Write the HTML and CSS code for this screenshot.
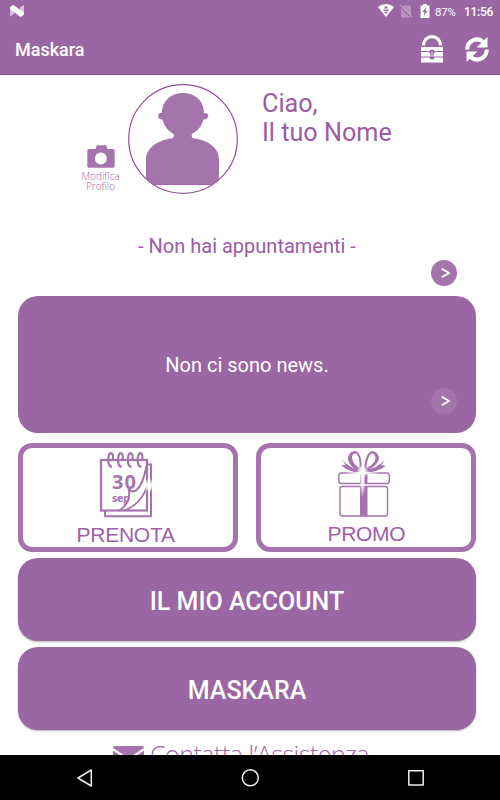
FILE: index.html
```
<!DOCTYPE html>
<html lang="it">
<head>
<meta charset="utf-8">
<title>Maskara</title>
<link rel="stylesheet" href="styles.css">
</head>
<body>
<div class="screen">
  <header class="top">
    <div class="status">
      <svg class="nougat" width="14" height="12" viewBox="0 0 14 12"><path d="M0 2 4 0v9L0 11.500zM10 2.500 14 0v9.500L10 12z" fill="#fff" opacity=".6"/><path d="M0 2 3.500 0 14 7.500v2L10.500 12 0 4z" fill="#fff"/></svg>
      <div class="status-right">
        <svg class="wifi" width="16" height="13" viewBox="0 0 16 13"><path d="M0 3Q8-3 16 3L8 13z" fill="#fff"/><path d="M6.200 4 7 2.500h2L9.800 4l1.200.6H5zM5.500 5.500h2l.5.5.5-.5h2v1.500h-2L8 6.500l-.5.500h-2zM6 8l2-.6L10 8 8 10z" fill="#9b66a4"/></svg>
        <svg class="nosim" width="12" height="13" viewBox="0 0 12 13"><path d="M3.500.5H11V12.500H1V3z" fill="#b990bf"/><path d="M0 1 12 13" stroke="#9b66a4" stroke-width="1.400"/><path d="M0 0 12 12" stroke="#cfb1d3"/></svg>
        <svg class="battery" width="10" height="14" viewBox="0 0 10 14"><path d="M3 0h4v1.500h2.500V14H.5V1.500H3z" fill="#fff"/><path d="M6 3 2.500 8h2L4 12l3.500-5h-2z" fill="#9b66a4"/></svg>
        <span class="percent">87%</span>
        <span class="clock">11:56</span>
      </div>
    </div>
    <div class="appbar">
      <h1>Maskara</h1>
      <svg class="lock" width="22" height="28" viewBox="0 0 22 28"><path d="M2.500 10.500V9.700a8.500 8 0 0 1 17 0v.8" fill="none" stroke="#fff" stroke-width="3.200"/><path d="M0 12h22v4H0zM0 17h22v4.500H0zM0 22.500h22V27.500H0z" fill="#fff"/><path d="M11 14.500a2.600 2.600 0 0 1 1.500 4.700l.8 5H8.700l.8-5A2.600 2.600 0 0 1 11 14.500z" fill="#9b66a4"/><path d="M11 17v5" stroke="#fff" stroke-width=".8"/></svg>
      <svg class="sync" width="24" height="25" viewBox="0 0 24 25"><path d="M2.300 12.500A9.700 9.700 0 0 1 18.500 5M21.700 12.500A9.700 9.700 0 0 1 5.500 20" fill="none" stroke="#fff" stroke-width="4"/><path d="M22.500 0v10.500H11.500zM1.500 25V14.500h11z" fill="#fff"/></svg>
    </div>
  </header>

  <main>
    <section class="profile">
      <div class="edit">
        <svg width="28" height="23" viewBox="0 0 28 23"><path d="M2 4h6.500L9.500.9Q9.700.2 10.500.2h8q.8 0 1 .7l.8 3.100H26q1.700 0 1.700 1.700v15.500q0 1.600-1.700 1.600H2Q.3 22.800.3 21.200V5.700Q.3 4 2 4z" fill="#a674ac"/><circle cx="13.800" cy="13.500" r="5.900" fill="#fff"/></svg>
        <span>Modifica</span><span>Profilo</span>
      </div>
      <svg class="avatar" width="110" height="110" viewBox="0 0 110 110">
        <clipPath id="ring"><circle cx="55" cy="55" r="54"/></clipPath>
        <g clip-path="url(#ring)"><path d="M55 9C68 9 76 18 76 29C82 28 81.500 36 75.500 35.500C74 42 70 46.500 64.500 49.500C63 51.500 63.500 54 66 54.500C81 56 91 65 91 75V100.500H18V75C18 65 29 56 43.500 54.500C46 54 46.500 51.500 45 49.500C39.500 46.500 36 42 34.500 35.500C28.500 36 29 28 34 29C34 18 42 9 55 9z" fill="#a674ac"/><path d="M18 100.500h73" stroke="#a268a8"/></g>
        <circle cx="55" cy="55" r="54.300" fill="none" stroke="#935099" stroke-width="1.200"/>
      </svg>
      <p class="greeting">Ciao,<br>Il tuo Nome</p>
    </section>

    <section class="appointments">
      <p>- Non hai appuntamenti -</p>
      <button class="more"><svg width="9" height="10" viewBox="0 0 9 10"><path d="M.8.8 8 5 .8 9.200" fill="none" stroke="#fff" stroke-width="1.700"/></svg></button>
    </section>

    <section class="news">
      <p>Non ci sono news.</p>
      <button class="more"><svg width="9" height="10" viewBox="0 0 9 10"><path d="M.8.8 8 5 .8 9.200" fill="none" stroke="#fff" stroke-width="1.700"/></svg></button>
    </section>

    <section class="tiles">
      <div class="tile">
        <svg width="210" height="99" viewBox="23 448 210 99">
          <defs><radialGradient id="glow"><stop offset="0" stop-color="#fff"/><stop offset=".4" stop-color="#fff" stop-opacity=".85"/><stop offset="1" stop-color="#fff" stop-opacity="0"/></radialGradient></defs>
          <path d="M105 511v5.200h46V464.500H147" fill="none" stroke="#a674ac" stroke-width="2"/>
          <rect x="101" y="460" width="46" height="50.500" fill="#fff" stroke="#a674ac" stroke-width="2.200"/>
          <text class="cal-day" x="112" y="488.500" textLength="24">30</text>
          <text class="cal-month" x="112" y="501.500" textLength="18">sep</text>
          <path d="M146 470Q142 487 136 491Q132 493 129 488.500Q133 503 120 510Q138 509 146 489z" fill="#fff" opacity=".55"/>
          <path d="M146.500 466Q143 485 136 490.500Q131 493 128.500 488Q132 503 119 510.500M146.500 488Q140 505 124 510.500" fill="none" stroke="#a674ac" stroke-width="2"/>
          <g fill="none" stroke="#a674ac" stroke-width="2.200"><path id="coil" d="M112 466.500Q108.500 467.500 108.200 460Q108.500 452.500 111.500 453.200Q114 454.500 112.500 461"/><use href="#coil" x="9.800"/><use href="#coil" x="19.600"/><use href="#coil" x="29.400"/></g>
          <circle cx="149" cy="485.500" r="7" fill="url(#glow)"/><ellipse cx="149" cy="485" rx="1.500" ry="15" fill="url(#glow)"/>
          <text class="tile-label" x="76.500" y="541.700" textLength="98.500">PRENOTA</text>
        </svg>
      </div>
      <div class="tile">
        <svg width="210" height="99" viewBox="261 448 210 99">
          <g fill="none" stroke="#a674ac">
            <rect x="338.800" y="473" width="50.500" height="10.500" rx="2.500" stroke-width="1.400"/>
            <rect x="340" y="486.500" width="47.500" height="29.500" rx="2.500" stroke-width="1.400"/>
          </g>
          <path fill-rule="evenodd" d="M361 472Q347 466 348 457Q350 451 355 451Q362 452 362 471zM359.500 468Q360 454 355 453.500Q352 454 352 458Q353 464 359.500 468zM364 472Q379 466 379 457Q377 451 372 451Q365 453 364 471zM366.500 468Q375 464 375.500 458Q375 453.500 372 453.500Q367 456 366.500 468z" fill="#a674ac"/>
          <path d="M361 473Q349 472 341 465.500L345.500 465 342.500 460Q350 469 361 469.500zM365 473Q377 472 386 466L381.500 465 384.500 460Q377 469 365 469.500z" fill="#a674ac"/>
          <path d="M360 473h7.500v10.500H360zM360 486h7.500v30H360z" fill="#a674ac"/>
          <circle cx="362.500" cy="471.500" r="6.500" fill="url(#glow)"/><ellipse cx="362.500" cy="478" rx="3" ry="20" fill="url(#glow)"/><ellipse cx="362.500" cy="473" rx="19" ry="1.700" fill="url(#glow)"/>
          <text class="tile-label" x="327.500" y="541" textLength="78">PROMO</text>
        </svg>
      </div>
    </section>

    <button class="action">IL MIO ACCOUNT</button>
    <button class="action">MASKARA</button>

    <div class="support">
      <svg width="31" height="24" viewBox="0 0 31 24"><path d="M2 0h27q2 0 2 2L15.500 12 0 2Q0 0 2 0zM0 4.500l9 6L0 20zM31 4.500l-9 6 9 9.500zM10.500 11.500l5 3 5-3L31 23H0z" fill="#a674ac"/></svg>
      <span>Contatta l’Assistenza</span>
    </div>
  </main>

  <nav>
    <svg width="500" height="45" viewBox="0 0 500 45" fill="none" stroke="#eee" stroke-width="1.500" stroke-linejoin="round"><path d="M91.300 15v16L78 23z"/><circle cx="250.300" cy="22.800" r="8"/><rect x="408.800" y="15.800" width="14.400" height="14.200"/></svg>
  </nav>
</div>
</body>
</html>
```
FILE: styles.css
```
* { box-sizing: border-box; }
body { margin: 0; font-family: Roboto, sans-serif; background: #fff; }
p, h1 { margin: 0; }
button { border: 0; padding: 0; font-family: inherit; }
svg { display: block; flex: none; }
.screen { width: 500px; height: 800px; display: flex; flex-direction: column; overflow: hidden; }

.top { height: 75px; flex: none; background: #9b66a4; border-bottom: 1px solid #914a9f; color: #fff; }
.status { height: 23px; display: flex; justify-content: space-between; padding: 4px 7px 0 10px; }
.nougat { margin-top: 1px; }
.status-right { display: flex; align-items: flex-start; }
.nosim { margin: 1px 8px 0 6px; }
.percent { font-size: 11.5px; line-height: 16px; margin-left: 5px; width: 29px; letter-spacing: -.2px; }
.clock { font-size: 12px; line-height: 16px; font-weight: 500; width: 29px; white-space: nowrap; letter-spacing: -.3px; }
.appbar { height: 52px; display: flex; align-items: center; padding: 0 11px 0 15px; }
.appbar h1 { font-size: 18px; font-weight: 500; flex: 1; }
.lock { margin-right: 22px; }

main { height: 680px; flex: none; overflow: hidden; padding: 0 24px 0 18px; display: flex; flex-direction: column; }
.profile { height: 149px; flex: none; display: flex; align-items: flex-start; padding: 9px 0 0 60px; }
.edit { width: 45px; margin: 61px 5px 0 0; display: flex; flex-direction: column; align-items: center; color: #a066a7; font: 300 10px/9.500px "Open Sans", sans-serif; }
.edit svg { margin-bottom: 4px; }
.greeting { color: #9b5ba5; font-size: 25.2px; line-height: 29px; margin: 5px 0 0 24px; }

.appointments { height: 71.500px; flex: none; display: flex; flex-direction: column; color: #9b5ba5; font-size: 20px; line-height: 24px; padding-top: 9.500px; }
.appointments p { text-align: center; }
.more { width: 26px; height: 26px; border-radius: 50%; background: #a674ac; display: flex; align-items: center; justify-content: center; align-self: flex-end; margin-right: 19px; padding-left: 2px; flex: none; }
.appointments .more { margin-top: 2px; }
.news { height: 137.500px; flex: none; border-radius: 20px; background: #9b66a4; color: #fff; display: flex; flex-direction: column; padding-top: 57.500px; font-size: 20px; line-height: 24px; }
.news p { text-align: center; }
.news .more { margin-top: 11px; }

.tiles { display: flex; gap: 18px; margin: 10px 0 6px; height: 109px; flex: none; }
.tile { width: 220px; border: 5px solid #a674ac; border-radius: 14px; overflow: hidden; }
.tile-label { font: 21px "Liberation Sans", sans-serif; fill: #a05fa8; }
.cal-day { font: bold 20px "Open Sans", sans-serif; fill: #a674ac; }
.cal-month { font: bold 11px "Open Sans", sans-serif; fill: #a674ac; }

.action { height: 83px; flex: none; margin-bottom: 6px; border-radius: 20px; background: #9b66a4; color: #fff; font-size: 25px; font-weight: 500; box-shadow: 0 1px 2px rgba(0,0,0,.3); padding-top: 4px; }
.support { display: flex; gap: 6px; padding: 10px 0 0 95px; color: #a066a7; font: 300 25px/28px "Open Sans", sans-serif; white-space: nowrap; }
.support span { margin-top: -6px; letter-spacing: -.5px; }
nav { height: 45px; flex: none; background: #000; }
```
